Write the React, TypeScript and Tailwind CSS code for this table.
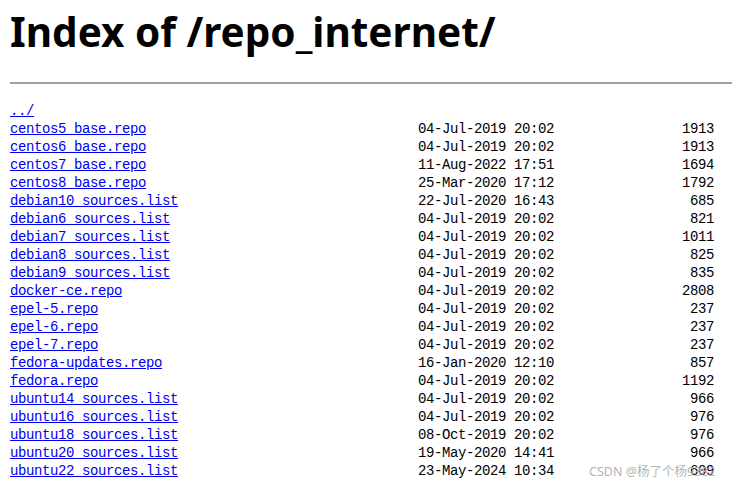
const files: [string, string, string][] = [
  ["centos5_base.repo", "04-Jul-2019 20:02", "1913"],
  ["centos6_base.repo", "04-Jul-2019 20:02", "1913"],
  ["centos7_base.repo", "11-Aug-2022 17:51", "1694"],
  ["centos8_base.repo", "25-Mar-2020 17:12", "1792"],
  ["debian10_sources.list", "22-Jul-2020 16:43", "685"],
  ["debian6_sources.list", "04-Jul-2019 20:02", "821"],
  ["debian7_sources.list", "04-Jul-2019 20:02", "1011"],
  ["debian8_sources.list", "04-Jul-2019 20:02", "825"],
  ["debian9_sources.list", "04-Jul-2019 20:02", "835"],
  ["docker-ce.repo", "04-Jul-2019 20:02", "2808"],
  ["epel-5.repo", "04-Jul-2019 20:02", "237"],
  ["epel-6.repo", "04-Jul-2019 20:02", "237"],
  ["epel-7.repo", "04-Jul-2019 20:02", "237"],
  ["fedora-updates.repo", "16-Jan-2020 12:10", "857"],
  ["fedora.repo", "04-Jul-2019 20:02", "1192"],
  ["ubuntu14_sources.list", "04-Jul-2019 20:02", "966"],
  ["ubuntu16_sources.list", "04-Jul-2019 20:02", "976"],
  ["ubuntu18_sources.list", "08-Oct-2019 20:02", "976"],
  ["ubuntu20_sources.list", "19-May-2020 14:41", "966"],
  ["ubuntu22_sources.list", "23-May-2024 10:34", "609"],
];

export default function App() {
  return (
    <div className="relative h-[487px] bg-white text-black pl-[10px] overflow-hidden">
      {/* Title */}
      <h1 className="pt-[8px] text-[40.5px] leading-[48px] font-bold font-['Noto_Sans','Open_Sans',sans-serif]">
        Index of /repo_internet/
      </h1>

      <hr className="mt-[26px] border-0 border-t-2 border-[#a0a0a0]" />

      {/* Listing */}
      <div className="mt-[18px] font-['Liberation_Mono',monospace] text-[14px] tracking-[-0.4px] leading-[18px] whitespace-pre">
        <div>
          <a href="#" className="text-[#0000ee] underline">../</a>
        </div>
        {files.map(([name, date, size]) => (
          <div key={name} className="grid grid-cols-[408px_136px_160px]">
            <div>
              <a href="#" className="text-[#0000ee] underline">{name}</a>
            </div>
            <div>{date}</div>
            <div className="text-right">{size}</div>
          </div>
        ))}
      </div>

      {/* Watermark */}
      <div className="absolute left-[589px] top-[463px] text-[12.5px] leading-[18px] text-[#b4b4b4] font-['Noto_Sans','Noto_Sans_CJK_SC',sans-serif] pointer-events-none">
        CSDN @杨了个杨9382
      </div>
    </div>
  );
}
